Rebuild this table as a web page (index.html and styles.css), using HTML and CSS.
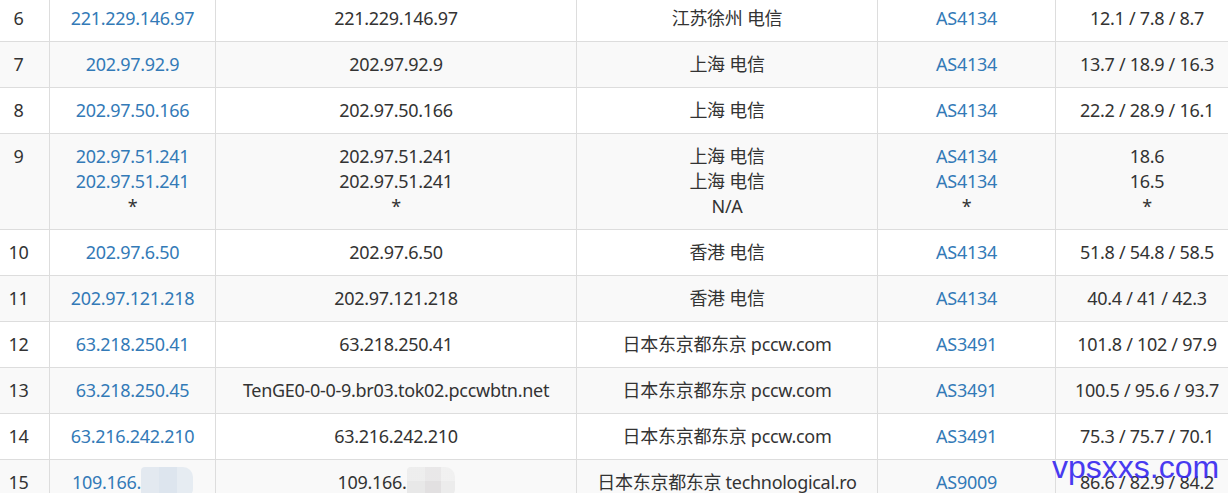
FILE: index.html
```html
<!DOCTYPE html>
<html lang="zh-CN">
<head>
    <meta charset="UTF-8">
    <meta name="viewport" content="width=device-width, initial-scale=1.0">
    <title>traceroute</title>
    <link rel="stylesheet" href="styles.css">
</head>
<body>
<div class="wrap">
    <table class="trace">
        <colgroup>
            <col class="c-hop">
            <col class="c-ip">
            <col class="c-host">
            <col class="c-loc">
            <col class="c-as">
            <col class="c-time">
        </colgroup>
        <tbody>
            <tr>
                <td>6</td>
                <td><a href="#">221.229.146.97</a></td>
                <td>221.229.146.97</td>
                <td>江苏徐州 电信</td>
                <td><a href="#">AS4134</a></td>
                <td>12.1 / 7.8 / 8.7</td>
            </tr>
            <tr>
                <td>7</td>
                <td><a href="#">202.97.92.9</a></td>
                <td>202.97.92.9</td>
                <td>上海 电信</td>
                <td><a href="#">AS4134</a></td>
                <td>13.7 / 18.9 / 16.3</td>
            </tr>
            <tr>
                <td>8</td>
                <td><a href="#">202.97.50.166</a></td>
                <td>202.97.50.166</td>
                <td>上海 电信</td>
                <td><a href="#">AS4134</a></td>
                <td>22.2 / 28.9 / 16.1</td>
            </tr>
            <tr>
                <td>9</td>
                <td><a href="#">202.97.51.241</a><br><a href="#">202.97.51.241</a><br>*</td>
                <td>202.97.51.241<br>202.97.51.241<br>*</td>
                <td>上海 电信<br>上海 电信<br>N/A</td>
                <td><a href="#">AS4134</a><br><a href="#">AS4134</a><br>*</td>
                <td>18.6<br>16.5<br>*</td>
            </tr>
            <tr>
                <td>10</td>
                <td><a href="#">202.97.6.50</a></td>
                <td>202.97.6.50</td>
                <td>香港 电信</td>
                <td><a href="#">AS4134</a></td>
                <td>51.8 / 54.8 / 58.5</td>
            </tr>
            <tr>
                <td>11</td>
                <td><a href="#">202.97.121.218</a></td>
                <td>202.97.121.218</td>
                <td>香港 电信</td>
                <td><a href="#">AS4134</a></td>
                <td>40.4 / 41 / 42.3</td>
            </tr>
            <tr>
                <td>12</td>
                <td><a href="#">63.218.250.41</a></td>
                <td>63.218.250.41</td>
                <td>日本东京都东京 pccw.com</td>
                <td><a href="#">AS3491</a></td>
                <td>101.8 / 102 / 97.9</td>
            </tr>
            <tr>
                <td>13</td>
                <td><a href="#">63.218.250.45</a></td>
                <td>TenGE0-0-0-9.br03.tok02.pccwbtn.net</td>
                <td>日本东京都东京 pccw.com</td>
                <td><a href="#">AS3491</a></td>
                <td>100.5 / 95.6 / 93.7</td>
            </tr>
            <tr>
                <td>14</td>
                <td><a href="#">63.216.242.210</a></td>
                <td>63.216.242.210</td>
                <td>日本东京都东京 pccw.com</td>
                <td><a href="#">AS3491</a></td>
                <td>75.3 / 75.7 / 70.1</td>
            </tr>
            <tr>
                <td>15</td>
                <td><a href="#">109.166.</a><span class="blur blue"></span></td>
                <td>109.166.<span class="blur grey"></span></td>
                <td>日本东京都东京 technological.ro</td>
                <td><a href="#">AS9009</a></td>
                <td>86.6 / 82.9 / 84.2</td>
            </tr>
        </tbody>
    </table>
    <div class="mark">vpsxxs.com</div>
</div>
</body>
</html>
```

FILE: styles.css
```css
* {
    margin: 0;
    padding: 0;
    box-sizing: border-box;
}
html, body {
    background: #fff;
    overflow: hidden;
}
body {
    font-family: "Noto Sans", "Noto Sans CJK SC", sans-serif;
    font-size: 18px;
    color: #333;
}
.wrap {
    position: relative;
    height: 498px;
}
.trace {
    border-collapse: collapse;
    table-layout: fixed;
    width: 1251px;
    margin: -5px 0 0 -13px;
}
.c-hop { width: 62px; }
.c-ip { width: 166px; }
.c-host { width: 361px; }
.c-loc { width: 301px; }
.c-as { width: 178px; }
.c-time { width: 183px; }
.trace td {
    border: 1px solid #ddd;
    padding: 10px 0;
    line-height: 25px;
    text-align: center;
    vertical-align: top;
    letter-spacing: -0.3px;
    white-space: nowrap;
}
.trace tr:nth-child(even) td {
    background: #f9f9f9;
}
.trace a {
    color: #337ab7;
    text-decoration: none;
}
.blur {
    display: inline-block;
    vertical-align: top;
    height: 30px;
    margin-top: -3px;
    border-radius: 4px 10px 8px 2px;
}
.blur.blue {
    width: 52px;
    background:
        linear-gradient(90deg, #e3e9f0 0 18px, #dde5ee 18px 36px, #e6ecf2 36px);
}
.blur.grey {
    width: 48px;
    background:
        linear-gradient(180deg, rgba(255,255,255,0.25) 0 14px, rgba(0,0,0,0) 14px),
        linear-gradient(90deg, #e8e8e8 0 18px, #e2e0e1 18px 34px, #ececec 34px);
}
.mark {
    position: absolute;
    left: 1052px;
    top: 456px;
    font-family: "Liberation Sans", Arial, sans-serif;
    font-size: 32px;
    line-height: 32px;
    color: #3526f0;
    opacity: 0.9;
}
```
